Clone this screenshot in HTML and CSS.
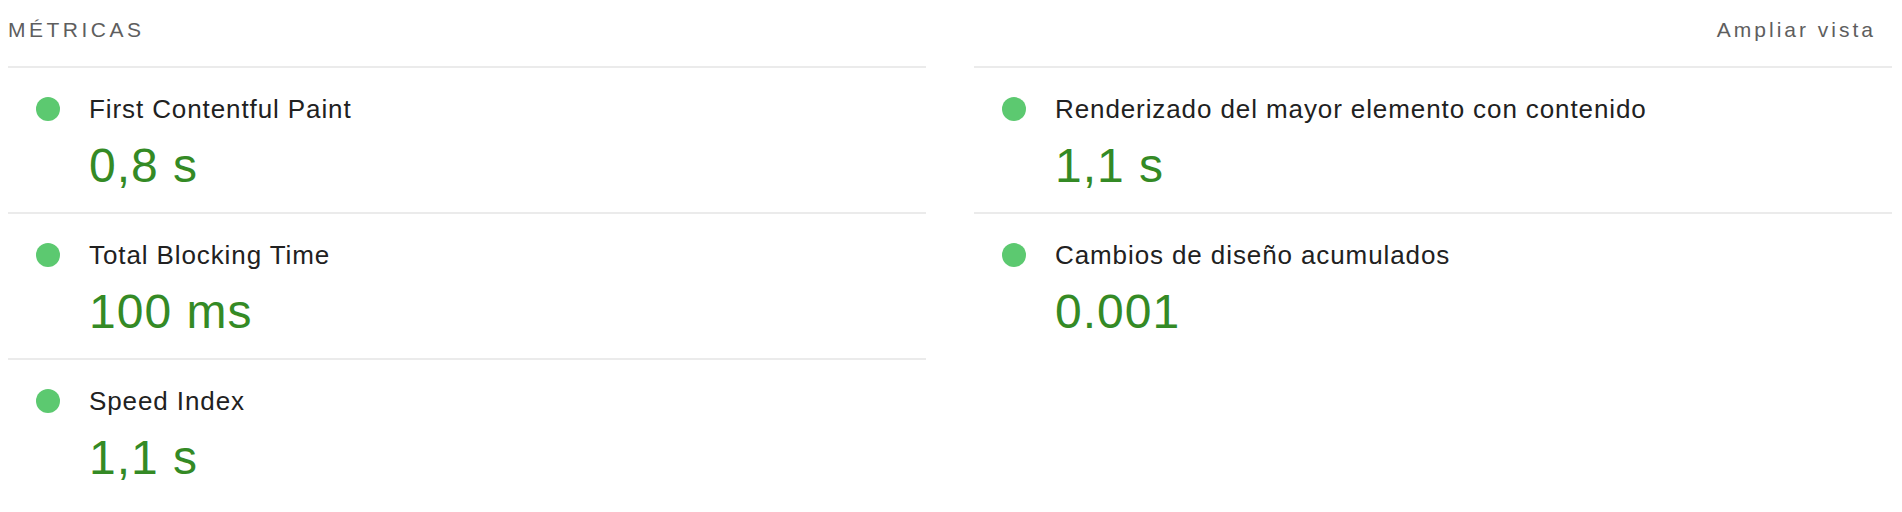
FILE: index.html
```html
<!DOCTYPE html>
<html>
<head>
  <meta charset="utf-8">
  <title>Métricas</title>
  <link rel="stylesheet" href="styles.css">
</head>
<body>
  <div class="metrics-header">
    <span class="metrics-title">MÉTRICAS</span>
    <span class="metrics-toggle">Ampliar vista</span>
  </div>

  <div class="metrics-grid">
    <div class="metrics-column">
      <div class="metric">
        <span class="metric-dot"></span>
        <div class="metric-body">
          <div class="metric-title">First Contentful Paint</div>
          <div class="metric-value">0,8&nbsp;s</div>
        </div>
      </div>
      <div class="metric">
        <span class="metric-dot"></span>
        <div class="metric-body">
          <div class="metric-title">Total Blocking Time</div>
          <div class="metric-value">100&nbsp;ms</div>
        </div>
      </div>
      <div class="metric">
        <span class="metric-dot"></span>
        <div class="metric-body">
          <div class="metric-title">Speed Index</div>
          <div class="metric-value">1,1&nbsp;s</div>
        </div>
      </div>
    </div>

    <div class="metrics-column">
      <div class="metric">
        <span class="metric-dot"></span>
        <div class="metric-body">
          <div class="metric-title">Renderizado del mayor elemento con contenido</div>
          <div class="metric-value">1,1&nbsp;s</div>
        </div>
      </div>
      <div class="metric">
        <span class="metric-dot"></span>
        <div class="metric-body">
          <div class="metric-title">Cambios de diseño acumulados</div>
          <div class="metric-value">0.001</div>
        </div>
      </div>
    </div>
  </div>
</body>
</html>
```

FILE: styles.css
```css
body {
  font-family: "Liberation Sans", Arial, Helvetica, sans-serif;
  background-color: white;
  margin: 0 10px 0 8px;
  padding: 0;
}

.metrics-header {
  display: flex;
  justify-content: space-between;
  align-items: center;
  padding: 16px 16px 22px 0;
  font-size: 21px;
  line-height: 28px;
  letter-spacing: 3px;
  color: #5e5e5e;
}

.metrics-title {
  letter-spacing: 3.5px;
}

.metrics-grid {
  display: grid;
  grid-template-columns: 1fr 1fr;
  column-gap: 48px;
}

.metric {
  display: flex;
  align-items: flex-start;
  border-top: 2px solid #ebebeb;
  padding: 28px 0 18px 28px;
}

.metric-dot {
  width: 24px;
  height: 24px;
  border-radius: 50%;
  background-color: #5cc970;
  margin-top: 1px;
  margin-right: 29px;
  flex-shrink: 0;
}

.metric-title {
  font-size: 26px;
  line-height: 28px;
  letter-spacing: 0.9px;
  margin-top: -1px;
  color: #212121;
}

.metric-value {
  font-size: 48px;
  line-height: 56px;
  letter-spacing: 1px;
  margin-top: 15px;
  color: #348a25;
}
```
